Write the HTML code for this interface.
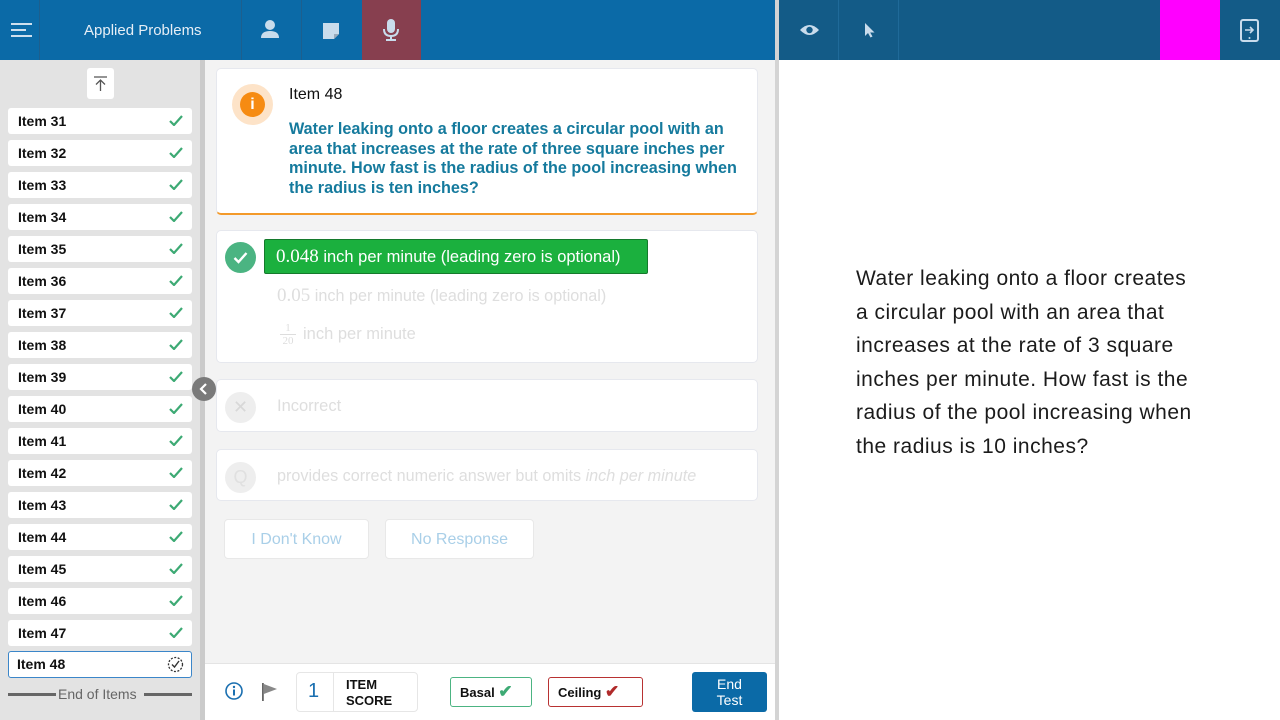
<!DOCTYPE html>
<html><head><meta charset="utf-8"><style>
*{box-sizing:border-box;margin:0;padding:0}
body{width:1280px;height:720px;overflow:hidden;font-family:"Liberation Sans",sans-serif;position:relative;background:#fff}
.a{position:absolute}
.hdr{top:0;left:0;width:775px;height:60px;background:#0b6aa7}
.hdr2{top:0;left:779px;width:501px;height:60px;background:#135b87}
.sep{position:absolute;top:0;width:1px;height:60px;background:#1d5f8e}
.item{position:absolute;left:8px;width:184px;height:26px;background:#fff;border-radius:3px;font-weight:bold;font-size:14px;line-height:26px;padding-left:10px;color:#111}
.item svg{position:absolute;right:9px;top:7px}
.card{position:absolute;left:216px;width:542px;background:#fff;border:1px solid #e6e8ee;border-radius:5px}
.circ{position:absolute;left:9px;width:31px;height:31px;border-radius:50%;background:#eee}
.faint{color:#dedede;font-size:16px}
</style></head><body>
<div class="a hdr"></div>
<div class="a" style="left:0;top:0;width:40px;height:60px;border-right:1px solid #1d5f8e"></div>
<svg class="a" style="left:11px;top:23px" width="22" height="14"><rect y="0" width="21" height="2" fill="#cfe0ee"/><rect y="6" width="15" height="2" fill="#cfe0ee"/><rect y="12" width="21" height="2" fill="#cfe0ee"/></svg>
<div class="a" style="left:84px;top:22px;color:#e6eef6;font-size:15px">Applied Problems</div>
<div class="sep" style="left:241px"></div><div class="sep" style="left:301px"></div>
<svg class="a" style="left:260px;top:19px" width="20" height="20"><circle cx="10" cy="6" r="5" fill="#c9dcec"/><path d="M1 19 Q1 12 10 12 Q19 12 19 19Z" fill="#c9dcec"/></svg>
<svg class="a" style="left:322px;top:22px" width="18" height="18"><path d="M1 1H17V12L12 17H1Z" fill="#c9dcec"/><path d="M12 17V12H17" fill="#9ab" /></svg>
<div class="a" style="left:362px;top:0;width:59px;height:60px;background:#873f4f"></div>
<svg class="a" style="left:381px;top:18px" width="20" height="24"><rect x="6" y="1" width="8" height="14" rx="4" fill="#c9dcec"/><path d="M3 11 Q3 18 10 18 Q17 18 17 11" stroke="#c9dcec" stroke-width="2" fill="none"/><rect x="9" y="18" width="2" height="4" fill="#c9dcec"/><rect x="5" y="21" width="10" height="2" fill="#c9dcec"/></svg>
<div class="a" style="left:775px;top:0;width:4px;height:720px;background:#d4d4d4"></div>
<div class="a hdr2"></div>
<div class="sep" style="left:838px;background:#1f6a99"></div><div class="sep" style="left:898px;background:#1f6a99"></div>
<svg class="a" style="left:800px;top:24px" width="19" height="12"><path d="M0 6 Q9.5 -4 19 6 Q9.5 16 0 6Z" fill="#c9dcec"/><circle cx="9.5" cy="6" r="3.2" fill="#135b87"/></svg>
<svg class="a" style="left:864px;top:22px" width="12" height="16"><path d="M1 1V14L4 11L6.5 15.5L8.5 14.5L6.2 10.5H10.5Z" fill="#c9dcec"/></svg>
<div class="a" style="left:1160px;top:0;width:60px;height:60px;background:#ff00ff"></div>
<svg class="a" style="left:1240px;top:19px" width="19" height="23"><rect x="1" y="1" width="17" height="21" rx="2" fill="none" stroke="#c9dcec" stroke-width="2"/><path d="M5 11H13M10 8L13 11L10 14" stroke="#c9dcec" stroke-width="1.6" fill="none"/><circle cx="9.5" cy="19" r="1" fill="#c9dcec"/></svg>

<div class="a" style="left:0;top:60px;width:200px;height:660px;background:#e3e3e3"></div>
<div class="a" style="left:200px;top:60px;width:5px;height:660px;background:#cbcbcb"></div>
<div class="a" style="left:205px;top:60px;width:570px;height:603px;background:#f3f3f3"></div>
<div class="a" style="left:205px;top:663px;width:570px;height:57px;background:#fff;border-top:1px solid #e4e4e4"></div>

<div class="a" style="left:87px;top:68px;width:27px;height:31px;background:#fff;border-radius:3px"></div>
<svg class="a" style="left:93px;top:76px" width="15" height="16"><path d="M1 1H14M7.5 15V4M3 8.5L7.5 4L12 8.5" stroke="#555" stroke-width="1.3" fill="none"/></svg>

<div class="item" style="top:108px">Item 31<svg width="14" height="11"><path d="M1 6L5 10L13 1" stroke="#3daa74" stroke-width="2.2" fill="none"/></svg></div>
<div class="item" style="top:140px">Item 32<svg width="14" height="11"><path d="M1 6L5 10L13 1" stroke="#3daa74" stroke-width="2.2" fill="none"/></svg></div>
<div class="item" style="top:172px">Item 33<svg width="14" height="11"><path d="M1 6L5 10L13 1" stroke="#3daa74" stroke-width="2.2" fill="none"/></svg></div>
<div class="item" style="top:204px">Item 34<svg width="14" height="11"><path d="M1 6L5 10L13 1" stroke="#3daa74" stroke-width="2.2" fill="none"/></svg></div>
<div class="item" style="top:236px">Item 35<svg width="14" height="11"><path d="M1 6L5 10L13 1" stroke="#3daa74" stroke-width="2.2" fill="none"/></svg></div>
<div class="item" style="top:268px">Item 36<svg width="14" height="11"><path d="M1 6L5 10L13 1" stroke="#3daa74" stroke-width="2.2" fill="none"/></svg></div>
<div class="item" style="top:300px">Item 37<svg width="14" height="11"><path d="M1 6L5 10L13 1" stroke="#3daa74" stroke-width="2.2" fill="none"/></svg></div>
<div class="item" style="top:332px">Item 38<svg width="14" height="11"><path d="M1 6L5 10L13 1" stroke="#3daa74" stroke-width="2.2" fill="none"/></svg></div>
<div class="item" style="top:364px">Item 39<svg width="14" height="11"><path d="M1 6L5 10L13 1" stroke="#3daa74" stroke-width="2.2" fill="none"/></svg></div>
<div class="item" style="top:396px">Item 40<svg width="14" height="11"><path d="M1 6L5 10L13 1" stroke="#3daa74" stroke-width="2.2" fill="none"/></svg></div>
<div class="item" style="top:428px">Item 41<svg width="14" height="11"><path d="M1 6L5 10L13 1" stroke="#3daa74" stroke-width="2.2" fill="none"/></svg></div>
<div class="item" style="top:460px">Item 42<svg width="14" height="11"><path d="M1 6L5 10L13 1" stroke="#3daa74" stroke-width="2.2" fill="none"/></svg></div>
<div class="item" style="top:492px">Item 43<svg width="14" height="11"><path d="M1 6L5 10L13 1" stroke="#3daa74" stroke-width="2.2" fill="none"/></svg></div>
<div class="item" style="top:524px">Item 44<svg width="14" height="11"><path d="M1 6L5 10L13 1" stroke="#3daa74" stroke-width="2.2" fill="none"/></svg></div>
<div class="item" style="top:556px">Item 45<svg width="14" height="11"><path d="M1 6L5 10L13 1" stroke="#3daa74" stroke-width="2.2" fill="none"/></svg></div>
<div class="item" style="top:588px">Item 46<svg width="14" height="11"><path d="M1 6L5 10L13 1" stroke="#3daa74" stroke-width="2.2" fill="none"/></svg></div>
<div class="item" style="top:620px">Item 47<svg width="14" height="11"><path d="M1 6L5 10L13 1" stroke="#3daa74" stroke-width="2.2" fill="none"/></svg></div>
<div class="item" style="top:651px;height:27px;border:1.5px solid #3b86c9;padding-left:8px;line-height:24px">Item 48<svg width="17" height="17" style="top:4px;right:7px"><circle cx="8.5" cy="8.5" r="7" fill="none" stroke="#333" stroke-width="1.3" stroke-dasharray="2 1.5"/><path d="M5 8.5L7.5 11L12 5" stroke="#333" stroke-width="1.4" fill="none"/></svg></div>
<div class="a" style="left:8px;top:693px;width:48px;height:3px;background:#666"></div>
<div class="a" style="left:58px;top:686px;color:#666;font-size:14px">End of Items</div>
<div class="a" style="left:144px;top:693px;width:48px;height:3px;background:#666"></div>

<div class="a" style="left:192px;top:377px;width:24px;height:24px;border-radius:50%;background:#7a7a7a"></div>
<svg class="a" style="left:198px;top:383px" width="12" height="12"><path d="M8 1L3 6L8 11" stroke="#fff" stroke-width="2.2" fill="none"/></svg>

<div class="card" style="top:68px;height:147px;border-bottom:2px solid #f39a2a"></div>
<div class="a" style="left:232px;top:84px;width:41px;height:41px;border-radius:50%;background:#fde3c8"></div>
<div class="a" style="left:240px;top:92px;width:25px;height:25px;border-radius:50%;background:#f68b12;color:#fff;font-weight:bold;font-size:16px;text-align:center;line-height:25px">i</div>
<div class="a" style="left:289px;top:86px;font-size:16px;color:#111">Item 48</div>
<div class="a" style="left:289px;top:120px;width:462px;font-size:16.2px;font-weight:bold;color:#157a9d;line-height:19.5px">Water leaking onto a floor creates a circular pool with an area that increases at the rate of three square inches per minute. How fast is the radius of the pool increasing when the radius is ten inches?</div>

<div class="card" style="top:230px;height:133px"></div>
<div class="circ" style="top:242px;left:225px;background:#4bb482"></div>
<svg class="a" style="left:233px;top:251px" width="15" height="13"><path d="M1.5 7L5.5 11L13.5 2" stroke="#fff" stroke-width="2.4" fill="none"/></svg>
<div class="a" style="left:264px;top:239px;width:384px;height:35px;background:#1bb03e;border:1px solid #157a2c;border-radius:2px;color:#fff;font-size:16.5px;line-height:34px;padding-left:11px"><span style="font-family:'Liberation Serif',serif;font-size:19px">0.048</span> inch per minute (leading zero is optional)</div>
<div class="a faint" style="left:277px;top:285px;font-size:16.2px"><span style="font-family:'Liberation Serif',serif;font-size:19px">0.05</span> inch per minute (leading zero is optional)</div>
<div class="a" style="left:280px;top:322px;font-family:'Liberation Serif',serif;font-size:11px;color:#ddd;text-align:center;width:16px;line-height:12px">1<div style="border-top:1px solid #ddd">20</div></div>
<div class="a faint" style="left:303px;top:325px;font-size:16.5px">inch per minute</div>

<div class="card" style="top:379px;height:53px"></div>
<div class="circ" style="top:392px;left:225px;color:#d8d8d8;text-align:center;line-height:31px;font-size:18px">✕</div>
<div class="a faint" style="left:277px;top:397px;font-size:16.5px">Incorrect</div>
<div class="card" style="top:449px;height:52px"></div>
<div class="circ" style="top:462px;left:225px;color:#e0e0e0;text-align:center;line-height:31px;font-size:18px">Q</div>
<div class="a faint" style="left:277px;top:467px;font-size:16.2px">provides correct numeric answer but omits <i>inch per minute</i></div>

<div class="a" style="left:224px;top:519px;width:145px;height:40px;background:#fff;border:1px solid #e8e8e8;border-radius:4px;color:#a9cfe8;font-size:16px;text-align:center;line-height:40px">I Don't Know</div>
<div class="a" style="left:385px;top:519px;width:149px;height:40px;background:#fff;border:1px solid #e8e8e8;border-radius:4px;color:#a9cfe8;font-size:16px;text-align:center;line-height:40px">No Response</div>

<svg class="a" style="left:225px;top:682px" width="18" height="18"><circle cx="9" cy="9" r="8" fill="none" stroke="#1a6fb0" stroke-width="1.6"/><rect x="8" y="7.5" width="2" height="6" fill="#1a6fb0"/><circle cx="9" cy="5" r="1.2" fill="#1a6fb0"/></svg>
<svg class="a" style="left:261px;top:682px" width="18" height="20"><rect x="1" y="1" width="1.8" height="18" fill="#666"/><path d="M2.8 2L16 7L2.8 12Z" fill="#888"/></svg>
<div class="a" style="left:296px;top:672px;width:122px;height:40px;border:1px solid #e6e6e6;border-radius:4px;background:#fff"></div>
<div class="a" style="left:333px;top:673px;width:1px;height:38px;background:#e6e6e6"></div>
<div class="a" style="left:308px;top:680px;font-size:20px;color:#1a6fb0">1</div>
<div class="a" style="left:346px;top:677px;font-size:13px;font-weight:bold;line-height:16px;color:#111">ITEM<br>SCORE</div>
<div class="a" style="left:450px;top:677px;width:82px;height:30px;border:1.5px solid #4cb482;border-radius:3px;font-size:13px;font-weight:bold;line-height:27px;padding-left:9px;color:#111">Basal <span style="color:#3daa74;font-size:17px">✔</span></div>
<div class="a" style="left:548px;top:677px;width:95px;height:30px;border:1.5px solid #b83232;border-radius:3px;font-size:13px;font-weight:bold;line-height:27px;padding-left:9px;color:#111">Ceiling <span style="color:#b02a2a;font-size:17px">✔</span></div>
<div class="a" style="left:692px;top:672px;width:75px;height:40px;background:#0b6aa7;border-radius:3px;color:#fff;font-size:14px;text-align:center;line-height:16px;padding-top:4px">End<br>Test</div>

<div class="a" style="left:856px;top:262px;width:380px;font-size:21px;letter-spacing:0.5px;line-height:33.6px;color:#1b1b1b">Water leaking onto a floor creates<br>a circular pool with an area that<br>increases at the rate of 3 square<br>inches per minute. How fast is the<br>radius of the pool increasing when<br>the radius is 10 inches?</div>
</body></html>
